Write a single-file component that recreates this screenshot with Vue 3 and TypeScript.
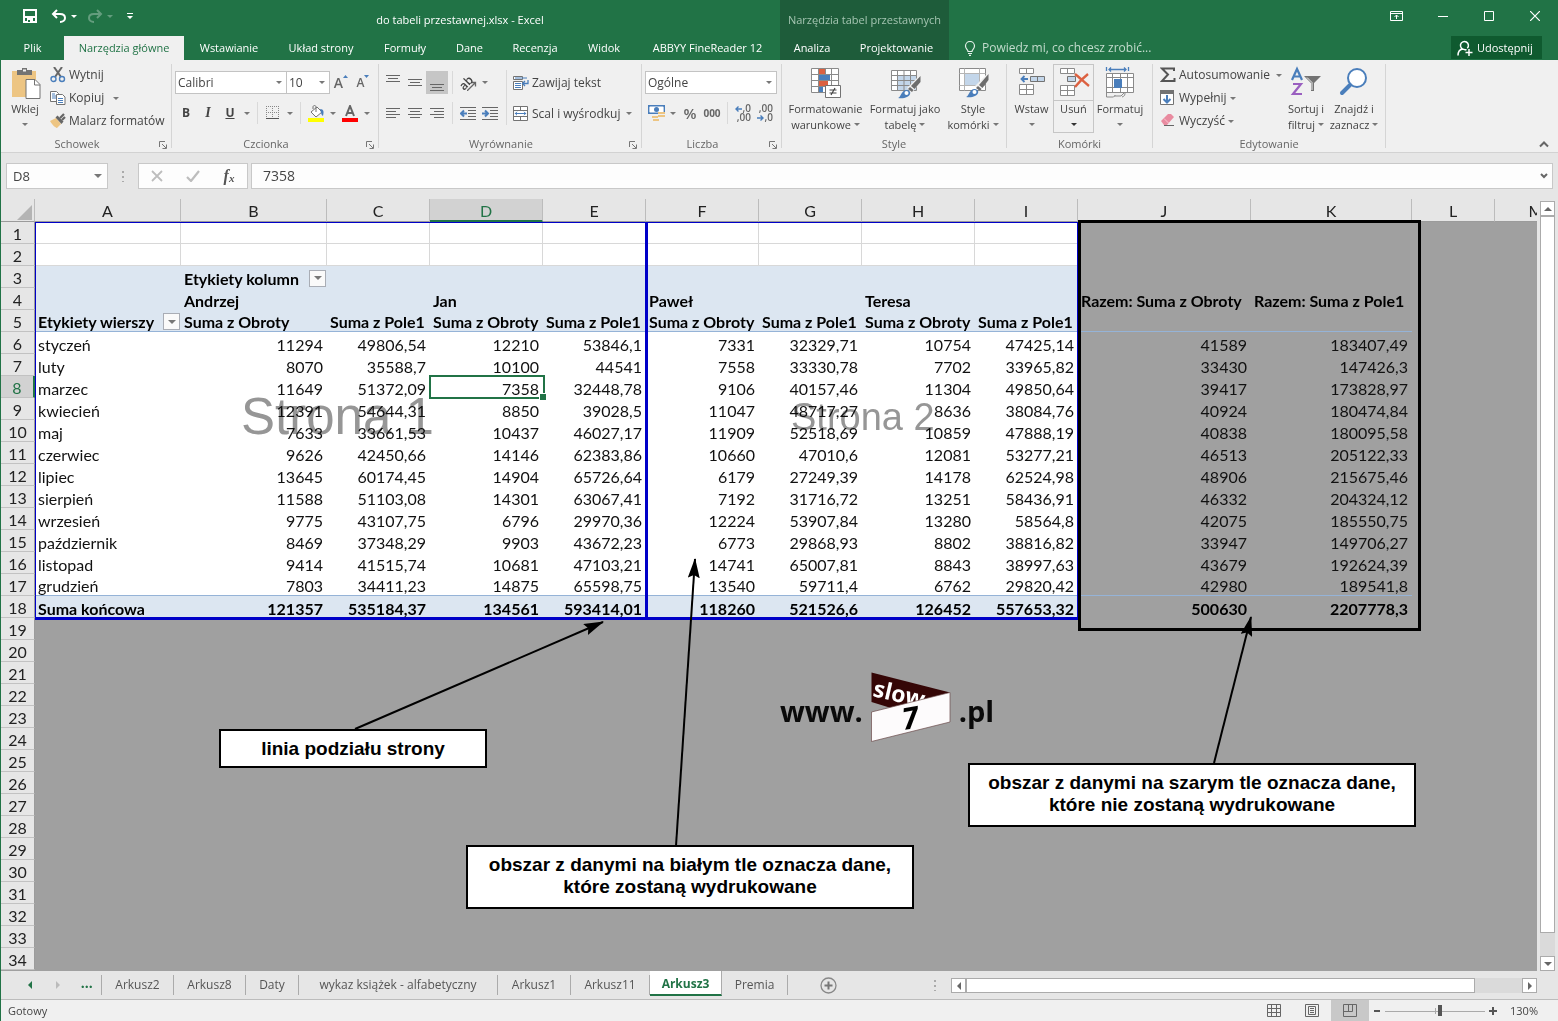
<script setup lang="ts">
import { ref } from 'vue'

interface Column { id: string; width: number }
interface Tab { label: string }

const columns: Column[] = [
  { id: 'A', width: 146 }, { id: 'B', width: 146 }, { id: 'C', width: 103 },
  { id: 'D', width: 113 }, { id: 'E', width: 103 }, { id: 'F', width: 113 },
  { id: 'G', width: 103 }, { id: 'H', width: 113 }, { id: 'I', width: 103 },
  { id: 'J', width: 173 }, { id: 'K', width: 161 }, { id: 'L', width: 83 },
  { id: 'M', width: 83 },
]

const months: string[][] = [
  ['styczeń', '11294', '49806,54', '12210', '53846,1', '7331', '32329,71', '10754', '47425,14', '41589', '183407,49'],
  ['luty', '8070', '35588,7', '10100', '44541', '7558', '33330,78', '7702', '33965,82', '33430', '147426,3'],
  ['marzec', '11649', '51372,09', '7358', '32448,78', '9106', '40157,46', '11304', '49850,64', '39417', '173828,97'],
  ['kwiecień', '12391', '54644,31', '8850', '39028,5', '11047', '48717,27', '8636', '38084,76', '40924', '180474,84'],
  ['maj', '7633', '33661,53', '10437', '46027,17', '11909', '52518,69', '10859', '47888,19', '40838', '180095,58'],
  ['czerwiec', '9626', '42450,66', '14146', '62383,86', '10660', '47010,6', '12081', '53277,21', '46513', '205122,33'],
  ['lipiec', '13645', '60174,45', '14904', '65726,64', '6179', '27249,39', '14178', '62524,98', '48906', '215675,46'],
  ['sierpień', '11588', '51103,08', '14301', '63067,41', '7192', '31716,72', '13251', '58436,91', '46332', '204324,12'],
  ['wrzesień', '9775', '43107,75', '6796', '29970,36', '12224', '53907,84', '13280', '58564,8', '42075', '185550,75'],
  ['październik', '8469', '37348,29', '9903', '43672,23', '6773', '29868,93', '8802', '38816,82', '33947', '149706,27'],
  ['listopad', '9414', '41515,74', '10681', '47103,21', '14741', '65007,81', '8843', '38997,63', '43679', '192624,39'],
  ['grudzień', '7803', '34411,23', '14875', '65598,75', '13540', '59711,4', '6762', '29820,42', '42980', '189541,8'],
]

const cells: Record<number, string[]> = {
  3: ['', 'Etykiety kolumn'],
  4: ['', 'Andrzej', '', 'Jan', '', 'Paweł', '', 'Teresa', '', 'Razem: Suma z Obroty', 'Razem: Suma z Pole1'],
  5: ['Etykiety wierszy', 'Suma z Obroty', 'Suma z Pole1', 'Suma z Obroty', 'Suma z Pole1', 'Suma z Obroty', 'Suma z Pole1', 'Suma z Obroty', 'Suma z Pole1'],
  18: ['Suma końcowa', '121357', '535184,37', '134561', '593414,01', '118260', '521526,6', '126452', '557653,32', '500630', '2207778,3'],
}
months.forEach((m, i) => { cells[6 + i] = m })

const rowCount = 34
const text = (row: number, col: number): string => cells[row]?.[col] ?? ''
const hasFilter = (row: number, col: number): boolean => (row === 3 && col === 1) || (row === 5 && col === 0)

function cellClass(row: number, col: number) {
  const printed = row <= 18 && col <= 8
  return {
    printed,
    lined: printed && row <= 2,
    head: printed && ((row >= 3 && row <= 5) || row === 18),
    bold: (row >= 3 && row <= 5) || row === 18,
    num: row >= 6 && col > 0,
    rule: (row === 5 || row === 17) && col <= 10,
  }
}

const ribbonTabs: Tab[] = [
  { label: 'Plik' }, { label: 'Narzędzia główne' }, { label: 'Wstawianie' }, { label: 'Układ strony' },
  { label: 'Formuły' }, { label: 'Dane' }, { label: 'Recenzja' }, { label: 'Widok' }, { label: 'ABBYY FineReader 12' },
]
const sheets = [
  { label: 'Arkusz2', width: 72 }, { label: 'Arkusz8', width: 72 }, { label: 'Daty', width: 53 },
  { label: 'wykaz książek - alfabetyczny', width: 199 }, { label: 'Arkusz1', width: 73 },
  { label: 'Arkusz11', width: 79 }, { label: 'Arkusz3', width: 72 }, { label: 'Premia', width: 66 },
]
const activeTab = ref('Narzędzia główne')
const activeSheet = ref('Arkusz3')
const zoom = ref(55)
const formula = ref('7358')
const cellName = ref('D8')
</script>

<template>
  <div class="app">
    <header class="top">
      <div class="titlebar">
        <div class="qat">
          <button class="q" aria-label="Zapisz">
            <svg width="14" height="14" viewBox="0 0 14 14"><path d="M1 1h12v12H1z" fill="none" stroke="#fff" stroke-width="2" /><path d="M1 7h12v2H1zM4 9h6v5H4z" fill="#fff" /><path d="M5 11h2v2H5z" fill="#217346" /></svg>
          </button>
          <button class="q" aria-label="Cofnij">
            <svg width="16" height="14" viewBox="0 0 16 14"><path d="M6 1L2 5l4 4M2 5h7c3 0 5 1.500 5 4 0 2-2 4-5 4" fill="none" stroke="#fff" stroke-width="2" /></svg>
            <i class="caret light"></i>
          </button>
          <button class="q dim" aria-label="Ponów">
            <svg width="16" height="14" viewBox="0 0 16 14"><path d="M10 1l4 4-4 4M14 5H7C4 5 2 6.500 2 9c0 2 2 4 5 4" fill="none" stroke="#fff" stroke-width="2" /></svg>
            <i class="caret light"></i>
          </button>
          <button class="q" aria-label="Dostosuj pasek">
            <svg width="6" height="8" viewBox="0 0 6 8"><path d="M0 1h6v1H0zM0 4h6L3 7z" fill="#fff" /></svg>
          </button>
        </div>
        <div class="doc">do tabeli przestawnej.xlsx - Excel</div>
        <div class="context">Narzędzia tabel przestawnych</div>
        <div class="grow"></div>
        <div class="win">
          <button aria-label="Opcje wstążki"><svg width="14" height="12" viewBox="0 0 14 12"><path d="M.5 1.500h12v9H.5zM.5 3.500h12M6.500 9V5M4.500 7l2-2 2 2" fill="none" stroke="#fff" /></svg></button>
          <button aria-label="Minimalizuj"><svg width="10" height="10" viewBox="0 0 10 10"><path d="M0 5.500h10" stroke="#fff" /></svg></button>
          <button aria-label="Maksymalizuj"><svg width="10" height="10" viewBox="0 0 10 10"><path d="M.5.5h9v9h-9z" fill="none" stroke="#fff" /></svg></button>
          <button aria-label="Zamknij"><svg width="10" height="10" viewBox="0 0 10 10"><path d="M0 0l10 10M10 0L0 10" stroke="#fff" stroke-width="1.200" /></svg></button>
        </div>
      </div>
      <nav class="tabs">
        <div class="main-tabs">
          <button v-for="t in ribbonTabs" :key="t.label" :class="{ on: t.label === activeTab }" @click="activeTab = t.label">{{ t.label }}</button>
        </div>
        <div class="context-tabs">
          <button>Analiza</button>
          <button>Projektowanie</button>
        </div>
        <label class="tell">
          <svg width="12" height="15" viewBox="0 0 12 15"><path d="M4 10.500C4 8.500 1.500 8 1.500 5a4.500 4.500 0 0 1 9 0c0 3-2.500 3.500-2.500 5.500zM4 12.500h4M5 14.300h2" fill="none" stroke="#e4f0e9" stroke-width="1.200" /></svg>
          <input type="text" placeholder="Powiedz mi, co chcesz zrobić..." aria-label="Powiedz mi, co chcesz zrobić" />
        </label>
        <button class="share">
          <svg width="16" height="16" viewBox="0 0 16 16"><path d="M7.500 9.500a4 4 0 1 1 2.800-1.200M5.500 9C3 9.500 1 11.500 1 15.500M7 9.500c1 0 2 .2 2.500.5M12 9v7M8.500 12.500h7M10.300 8.300a4 4 0 0 0 .5-.6" fill="none" stroke="#fff" stroke-width="1.500" /></svg>
          Udostępnij
        </button>
      </nav>
    </header>

    <section class="ribbon">
      <div class="group g-clip">
        <div class="body">
          <button class="big">
            <svg width="32" height="32" viewBox="0 0 32 32"><path d="M3 3h24v26H3z" fill="#edc583" /><path d="M8 2h5V0h5v2h5v5H8z" fill="#737373" /><path d="M14 1.500h3v2h-3z" fill="#f0f0f0" /><path d="M17 11.500h9l5 5v14H17z" fill="#fff" stroke="#737373" /><path d="M25.500 11.500v5.500H31" fill="none" stroke="#737373" /></svg>
            <span>Wklej</span><i class="caret"></i>
          </button>
          <div class="stack">
            <button class="small">
              <svg width="16" height="16" viewBox="0 0 16 16"><path d="M4 0l7 10M12 0L5 10" stroke="#666" stroke-width="2" /><circle cx="3.500" cy="12" r="2.500" fill="none" stroke="#4a7ebb" stroke-width="1.400" /><circle cx="12" cy="12" r="2.500" fill="none" stroke="#4a7ebb" stroke-width="1.400" /></svg>
              Wytnij
            </button>
            <button class="small">
              <svg width="16" height="16" viewBox="0 0 16 16"><path d="M.5 1.500h6l2 2v8h-8z" fill="#fff" stroke="#737373" /><path d="M2 4h3M2 6h4M2 8h4" stroke="#4a7ebb" /><path d="M6.500 4.500h6l2.500 2.500v7.500H6.500z" fill="#fff" stroke="#737373" /><path d="M8 8.500h5M8 10.500h5M8 12.500h5" stroke="#4a7ebb" /></svg>
              Kopiuj<i class="caret far"></i>
            </button>
            <button class="small">
              <svg width="16" height="16" viewBox="0 0 16 16"><path d="M0 8l6-3 5 6-4 4c-1 0-4-2-7-7z" fill="#edc583" /><path d="M5.500 4.500l2-2 6 6-2 2.500z" fill="#666" /><path d="M10 5l4-4M12 7l3-3" stroke="#666" stroke-width="2.200" /></svg>
              Malarz formatów
            </button>
          </div>
        </div>
        <div class="foot">Schowek<svg class="launch" viewBox="0 0 8 8"><path d="M.5 6V.5H6M3 3l4 4M7.500 3.500v4h-4" fill="none" stroke="#777" /></svg></div>
      </div>

      <div class="group g-font">
        <div class="body rows">
          <div class="line">
            <div class="sel wide"><select aria-label="Czcionka"><option>Calibri</option></select><i class="caret"></i></div>
            <div class="sel narrow"><select aria-label="Rozmiar czcionki"><option>10</option></select><i class="caret"></i></div>
            <button class="ib grow-a" aria-label="Zwiększ rozmiar"><b class="fa">A</b><svg width="5" height="3" viewBox="0 0 5 3"><path d="M0 3h5L2.500 0z" fill="#4a7ebb" /></svg></button>
            <button class="ib shrink-a" aria-label="Zmniejsz rozmiar"><b class="fa">A</b><svg width="5" height="3" viewBox="0 0 5 3"><path d="M0 0h5L2.500 3z" fill="#4a7ebb" /></svg></button>
          </div>
          <div class="line second">
            <button class="ib strong">B</button><button class="ib strong ital">I</button><button class="ib strong under">U</button>
            <button class="cb" aria-label="Więcej"><i class="caret"></i></button><i class="sep"></i>
            <button class="ib" aria-label="Obramowanie"><svg width="14" height="14" viewBox="0 0 14 14"><path d="M.5 0v13M6.500 0v13M12.500 0v13M0 .5h13M0 6.500h13" stroke="#888" stroke-dasharray="1 1" /><path d="M0 12.500h13" stroke="#555" /></svg></button>
            <button class="cb" aria-label="Rodzaje obramowań"><i class="caret"></i></button><i class="sep"></i>
            <button class="ib" aria-label="Kolor wypełnienia"><svg width="17" height="17" viewBox="0 0 17 17"><path d="M3 7l6-5 5 5-6 5z" fill="#fff" stroke="#737373" /><path d="M8 7V2c0-2-3-2-3 0v2" fill="none" stroke="#737373" /><path d="M12 4c4 0 4 3 3 7-2-1-2-4-3-7z" fill="#4a7ebb" /><path d="M0 13h16v4H0z" fill="#ff0" /></svg></button>
            <button class="cb" aria-label="Kolory wypełnienia"><i class="caret"></i></button>
            <button class="ib" aria-label="Kolor czcionki"><svg width="17" height="17" viewBox="0 0 17 17"><path d="M4 11L8 1l4 10M5.500 8h5" fill="none" stroke="#666" stroke-width="2" /><path d="M0 13h16v4H0z" fill="#f00" /></svg></button>
            <button class="cb" aria-label="Kolory czcionki"><i class="caret"></i></button>
          </div>
        </div>
        <div class="foot">Czcionka<svg class="launch" viewBox="0 0 8 8"><path d="M.5 6V.5H6M3 3l4 4M7.500 3.500v4h-4" fill="none" stroke="#777" /></svg></div>
      </div>

      <div class="group g-align">
        <div class="body">
          <div class="rows">
            <div class="line">
              <button class="ib" aria-label="Do góry"><svg width="14" height="18" viewBox="0 0 14 18"><path d="M0 1.500h14M2 4.500h10M0 7.500h14" stroke="#666" /></svg></button>
              <button class="ib" aria-label="Do środka"><svg width="14" height="18" viewBox="0 0 14 18"><path d="M0 5.500h14M2 8.500h10M0 11.500h14" stroke="#666" /></svg></button>
              <button class="ib pressed" aria-label="Do dołu"><svg width="14" height="18" viewBox="0 0 14 18"><path d="M0 10.500h14M2 13.500h10M0 16.500h14" stroke="#666" /></svg></button>
              <i class="sep"></i>
              <button class="ib orient" aria-label="Orientacja"><span>ab</span><svg width="10" height="10" viewBox="0 0 10 10"><path d="M0 10l8-8M4.500 1.500H8.500V5.500" fill="none" stroke="#666" stroke-width="1.300" /></svg></button>
              <button class="cb" aria-label="Więcej orientacji"><i class="caret"></i></button>
            </div>
            <div class="line second">
              <button class="ib" aria-label="Do lewej"><svg width="14" height="12" viewBox="0 0 14 12"><path d="M0 1.500h14M0 4.500h10M0 7.500h14M0 10.500h10" stroke="#666" /></svg></button>
              <button class="ib" aria-label="Wyśrodkuj"><svg width="14" height="12" viewBox="0 0 14 12"><path d="M0 1.500h14M2 4.500h10M0 7.500h14M2 10.500h10" stroke="#666" /></svg></button>
              <button class="ib" aria-label="Do prawej"><svg width="14" height="12" viewBox="0 0 14 12"><path d="M0 1.500h14M4 4.500h10M0 7.500h14M4 10.500h10" stroke="#666" /></svg></button>
              <i class="sep"></i>
              <button class="ib" aria-label="Zmniejsz wcięcie"><svg width="16" height="13" viewBox="0 0 16 13"><path d="M0 .5h16M8 3.500h8M8 6.500h8M8 9.500h8M0 12.500h16" stroke="#666" /><path d="M7 6.500H2M4 3.500l-3 3 3 3" fill="none" stroke="#4a7ebb" stroke-width="2" /></svg></button>
              <button class="ib" aria-label="Zwiększ wcięcie"><svg width="16" height="13" viewBox="0 0 16 13"><path d="M0 .5h16M8 3.500h8M8 6.500h8M8 9.500h8M0 12.500h16" stroke="#666" /><path d="M0 6.500h5M3 3.500l3 3-3 3" fill="none" stroke="#4a7ebb" stroke-width="2" /></svg></button>
            </div>
          </div>
          <i class="tall"></i>
          <div class="rows">
            <button class="small tallrow">
              <svg width="16" height="16" viewBox="0 0 16 16"><path d="M.5 1.500h9v3h-9zM.5 6.500h9v8h-9z" fill="#fff" stroke="#737373" /><path d="M2 3h12M2 8.500h6M2 10.500h6M2 12.500h6" stroke="#4a7ebb" /><path d="M15 5v3.500h-5M12 6l-2.500 2.500L12 11" fill="none" stroke="#4a7ebb" stroke-width="1.300" /></svg>
              Zawijaj tekst
            </button>
            <button class="small tallrow">
              <svg width="16" height="16" viewBox="0 0 16 16"><path d="M.5.5h14v14H.5zM.5 4.500h14M.5 10.500h14M7.500 1v3M7.500 11v3" fill="#fff" stroke="#737373" /><path d="M2 7.500h11M4 5.800L2.300 7.500 4 9.200M11 5.800l1.700 1.700L11 9.200" fill="none" stroke="#4a7ebb" /></svg>
              Scal i wyśrodkuj<i class="caret mid"></i>
            </button>
          </div>
        </div>
        <div class="foot">Wyrównanie<svg class="launch" viewBox="0 0 8 8"><path d="M.5 6V.5H6M3 3l4 4M7.500 3.500v4h-4" fill="none" stroke="#777" /></svg></div>
      </div>

      <div class="group g-num">
        <div class="body rows">
          <div class="line"><div class="sel full"><select aria-label="Format liczb"><option>Ogólne</option></select><i class="caret"></i></div></div>
          <div class="line second">
            <button class="ib" aria-label="Format księgowy"><svg width="17" height="16" viewBox="0 0 17 16"><path d="M.7.7h15.600v7.600H.7z" fill="#fff" stroke="#4a7ebb" stroke-width="1.400" /><circle cx="8.500" cy="4.500" r="2.500" fill="#4a7ebb" /><path d="M0 0h3L0 3zM17 0h-3l3 3zM0 9h3L0 6z" fill="#4a7ebb" /><path d="M10 7h7v2h-7zM10 10h7v2h-7zM4 11h6v2H4zM5 14h6v2H5z" fill="#edc583" /></svg></button>
            <button class="cb" aria-label="Waluty"><i class="caret"></i></button>
            <button class="ib pct">%</button><button class="ib zeros">000</button><i class="sep"></i>
            <button class="ib dec" aria-label="Zwiększ dziesiętne"><span class="end">,0</span><span class="end">,00</span><svg width="7" height="6" viewBox="0 0 7 6"><path d="M7 3H1M3.500.5L1 3l2.500 2.500" fill="none" stroke="#4a7ebb" stroke-width="1.400" /></svg></button>
            <button class="ib dec inc" aria-label="Zmniejsz dziesiętne"><span class="end">,00</span><span class="end">,0</span><svg width="7" height="6" viewBox="0 0 7 6"><path d="M0 3h6M3.500.5L6 3 3.500 5.500" fill="none" stroke="#4a7ebb" stroke-width="1.400" /></svg></button>
          </div>
        </div>
        <div class="foot">Liczba<svg class="launch" viewBox="0 0 8 8"><path d="M.5 6V.5H6M3 3l4 4M7.500 3.500v4h-4" fill="none" stroke="#777" /></svg></div>
      </div>

      <div class="group g-style">
        <div class="body">
          <button class="big b81">
            <svg width="32" height="32" viewBox="0 0 32 32"><path d="M1.500.5h27v24h-27z" fill="#fff" /><path d="M9 1h6v5H9zM9 13h9v5H9z" fill="#dc6141" /><path d="M9 7h11v5H9zM9 19h4v5H9z" fill="#4a7ebb" /><path d="M1.500.5h27v24h-27zM1.500 6.500h27M1.500 12.500h27M1.500 18.500h27M8.500.5v24M15.500.5v6M21.500.5v24" fill="none" stroke="#8a8a8a" /><path d="M15.500 17.500h15v12h-15z" fill="#fff" stroke="#737373" /><path d="M19.500 22h7M19.500 25h7M25 20l-4 7" stroke="#444" stroke-width="1.200" /></svg>
            <span>Formatowanie</span><span>warunkowe<i class="caret in"></i></span>
          </button>
          <button class="big b78">
            <svg width="32" height="32" viewBox="0 0 32 32"><path d="M2.500 2.500h25v20h-25z" fill="#fff" /><path d="M9 8h18v14H9z" fill="#c3d6ea" /><path d="M2.500 2.500h25v20h-25zM2.500 7.500h25M2.500 12.500h25M2.500 17.500h25M8.500 2.500v20M15 2.500v20M21.500 2.500v20" fill="none" stroke="#8a8a8a" /><path d="M31 7l1 6-9 12-5-5z" fill="#f0f0f0" /><path d="M31.500 8v6l-6 7-3.500-3zM21 19l3.500 3-1.500 2-4-3z" fill="#6d6d6d" /><path d="M9 30c3-1 3-7 8-8 3 0 5 2 4 4-1 3-6 5-12 4z" fill="#4a7ebb" /><circle cx="17.500" cy="25" r="2" fill="#fff" /></svg>
            <span>Formatuj jako</span><span>tabelę<i class="caret in"></i></span>
          </button>
          <button class="big b58">
            <svg width="32" height="32" viewBox="0 0 32 32"><path d="M2.500.5h26v22h-26z" fill="#fff" stroke="#8a8a8a" /><path d="M2.500 5.500h26M2.500 17.500h26M7.500.5v22M22.500.5v22" stroke="#b5b5b5" /><path d="M8 6h14v11H8z" fill="#c3d6ea" /><path d="M31 5l1 6-9 12-5-5z" fill="#f0f0f0" /><path d="M31.500 6v6l-6 8-3.500-3zM21 18l3.500 3-1.500 2-4-3z" fill="#6d6d6d" /><path d="M9 29c3-1 3-7 8-8 3 0 5 2 4 4-1 3-6 5-12 4z" fill="#4a7ebb" /><circle cx="17.500" cy="24" r="2" fill="#fff" /></svg>
            <span>Style</span><span>komórki<i class="caret in"></i></span>
          </button>
        </div>
        <div class="foot">Style</div>
      </div>

      <div class="group g-cells">
        <div class="body">
          <button class="big b43">
            <svg width="32" height="32" viewBox="0 0 32 32"><path d="M3.500.5h14v5h-14zM10.500.5v5M3.500 16.500h14v10h-14zM3.500 21.500h14M10.500 16.500v10" fill="#fff" stroke="#8a8a8a" /><path d="M14.500 8.500h14v5h-14zM21.500 8.500v5" fill="#c3d6ea" stroke="#737373" /><path d="M12 11H6M8.500 8l-3 3 3 3" fill="none" stroke="#4a7ebb" stroke-width="1.800" /></svg>
            <span>Wstaw</span><i class="caret"></i>
          </button>
          <button class="big b41 split">
            <svg width="32" height="32" viewBox="0 0 32 32"><path d="M2.500.5h14v5h-14zM9.500.5v5M2.500 17.500h14v10h-14zM2.500 22.500h14M9.500 17.500v10" fill="#fff" stroke="#8a8a8a" /><path d="M9.500 8.500h8v5h-8z" fill="#c3d6ea" stroke="#737373" /><path d="M17 6c4 3 9 8 14 12M30 6C25 10 21 14 17 19" fill="none" stroke="#dc6141" stroke-width="2.400" /></svg>
            <span>Usuń</span><i class="caret dark"></i>
          </button>
          <button class="big b52">
            <svg width="32" height="32" viewBox="0 0 32 32"><path d="M2.500 5.500h27v19h-27z" fill="#fff" /><path d="M2.500 5.500h27v19h-27zM2.500 9.500h27M2.500 19.500h27M8.500 5.500v19M16.500 5.500v19M23.500 5.500v19" fill="none" stroke="#8a8a8a" /><path d="M10 11h8v9h-8z" fill="#4a7ebb" /><path d="M2.500 24v5h7l2-2M10 28h7l4-4M21 24c0 3 0 4-3 5" fill="none" stroke="#8a8a8a" /><path d="M2.500-1v4M24.500-1v4M5 1.500h17M7-.5l-2 2 2 2M20-.5l2 2-2 2" fill="none" stroke="#4a7ebb" stroke-width="1.300" /></svg>
            <span>Formatuj</span><i class="caret"></i>
          </button>
        </div>
        <div class="foot">Komórki</div>
      </div>

      <div class="group g-edit">
        <div class="body">
          <div class="stack">
            <button class="small"><svg width="16" height="16" viewBox="0 0 16 16"><path d="M14 4V1.500H2l6 6-6 6.500h12.500V11" fill="none" stroke="#555" stroke-width="2" /></svg>Autosumowanie<i class="caret mid"></i></button>
            <button class="small"><svg width="16" height="16" viewBox="0 0 16 16"><path d="M.5.5h13v14H.5z" fill="#fff" stroke="#737373" /><path d="M0 0h14v4H0z" fill="#737373" /><path d="M7 5v7M3.500 9L7 12.500 10.500 9" fill="none" stroke="#4a7ebb" stroke-width="2" /></svg>Wypełnij<i class="caret"></i></button>
            <button class="small"><svg width="16" height="16" viewBox="0 0 16 16"><path d="M1 8l7-7h3l3 3-7 8H4z" fill="#e98ba0" /><path d="M4 5.500l5 5" stroke="#f7c8d1" /><path d="M4 12.500h10" stroke="#666" /></svg>Wyczyść<i class="caret"></i></button>
          </div>
          <button class="big b44">
            <svg width="32" height="32" viewBox="0 0 32 32"><path d="M2 12L7 1l5 11M4 8.500h6" fill="none" stroke="#4a7ebb" stroke-width="2.200" /><path d="M3 16h8L3 26h9" fill="none" stroke="#9a5fc0" stroke-width="2.200" /><path d="M14 8h17l-7 7v8h-3v-8z" fill="#737373" /><path d="M17 9.500l5 5V22" fill="none" stroke="#f0f0f0" /></svg>
            <span>Sortuj i</span><span>filtruj<i class="caret in"></i></span>
          </button>
          <button class="big b52">
            <svg width="32" height="32" viewBox="0 0 32 32"><circle cx="19" cy="10" r="9" fill="#fff" stroke="#4a7ebb" stroke-width="2" /><path d="M12 17l-8 8" stroke="#4a7ebb" stroke-width="4" stroke-linecap="round" /></svg>
            <span>Znajdź i</span><span>zaznacz<i class="caret in"></i></span>
          </button>
        </div>
        <div class="foot">Edytowanie</div>
      </div>
      <div class="grow"></div>
      <button class="collapse" aria-label="Zwiń wstążkę"><svg width="10" height="7" viewBox="0 0 10 7"><path d="M1 5.500l4-4 4 4" fill="none" stroke="#666" stroke-width="2" /></svg></button>
    </section>

    <section class="formula">
      <div class="namebox"><input v-model="cellName" aria-label="Pole nazwy" /><button aria-label="Lista nazw"><i class="caret big-caret"></i></button></div>
      <div class="dots"></div>
      <div class="fx">
        <button aria-label="Anuluj"><svg width="12" height="12" viewBox="0 0 12 12"><path d="M1 1l10 10M11 1L1 11" stroke="#bdbdbd" stroke-width="1.800" /></svg></button>
        <button aria-label="Wpis"><svg width="14" height="12" viewBox="0 0 14 12"><path d="M1 7l4 4 8-10" fill="none" stroke="#bdbdbd" stroke-width="2.200" /></svg></button>
        <button class="fn" aria-label="Wstaw funkcję"><em>f</em><em class="x">x</em></button>
      </div>
      <div class="input"><input v-model="formula" aria-label="Pasek formuły" /><button aria-label="Rozwiń"><svg width="8" height="6" viewBox="0 0 8 6"><path d="M1 1l3 3 3-3" fill="none" stroke="#666" stroke-width="2" /></svg></button></div>
    </section>

    <main class="sheet">
      <div class="canvas">
        <table>
          <colgroup><col class="rowcol" /><col v-for="c in columns" :key="c.id" :style="{ width: c.width + 'px' }" /></colgroup>
          <thead>
            <tr>
              <th class="corner"><svg width="15" height="15" viewBox="0 0 15 15"><path d="M15 0v15H0z" fill="#b4b4b4" /></svg></th>
              <th v-for="c in columns" :key="c.id" :class="{ cur: c.id === 'D' }">{{ c.id }}</th>
            </tr>
          </thead>
          <tbody>
            <tr v-for="r in rowCount" :key="r">
              <th :class="{ cur: r === 8 }">{{ r }}</th>
              <td v-for="(c, i) in columns" :key="c.id" :class="cellClass(r, i)">
                <div v-if="hasFilter(r, i)" class="with-filter"><span>{{ text(r, i) }}</span><button class="filter" aria-label="Filtr"><i class="caret big-caret"></i></button></div>
                <template v-else>{{ text(r, i) }}</template>
              </td>
            </tr>
          </tbody>
        </table>
        <div class="mark one">Strona 1</div>
        <div class="mark two">Strona 2</div>
        <div class="print-area"></div>
        <div class="page-break"></div>
        <div class="unprinted"></div>
        <div class="selection"></div>
        <div class="logo">
          <span>www.</span>
          <svg width="80" height="70" viewBox="0 0 80 70">
            <path d="M.5.5L79 20.500 20 36 .5 30z" fill="#350606" />
            <text x="1" y="24" transform="rotate(13 1 24)" class="lg-slow">slow</text>
            <path d="M.5 40L79 20.500V50L.5 69.500z" fill="#fdfbfc" stroke="#6b4a4a" stroke-width=".7" />
            <text x="33" y="58" transform="rotate(-10 33 58)" class="lg-seven">7</text>
          </svg>
          <span>.pl</span>
        </div>
        <svg class="arrows" width="1536" height="772" viewBox="1 199 1536 772">
          <defs><marker id="tip" markerWidth="20" markerHeight="12" refX="19" refY="6" orient="auto" markerUnits="userSpaceOnUse"><path d="M0 0l20 6L0 12l3-6z" /></marker></defs>
          <path d="M355 729L603 622" marker-end="url(#tip)" />
          <path d="M676 846L695 559" marker-end="url(#tip)" />
          <path d="M1214 763L1251 617" marker-end="url(#tip)" />
        </svg>
        <div class="note n1">linia podziału strony</div>
        <div class="note n2">obszar z danymi na białym tle oznacza dane,<br />które zostaną wydrukowane</div>
        <div class="note n3">obszar z danymi na szarym tle oznacza dane,<br />które nie zostaną wydrukowane</div>
      </div>
      <div class="vscroll">
        <button aria-label="W górę"><i class="tri up"></i></button>
        <div class="vthumb"></div>
        <div class="vtrack"></div>
        <button aria-label="W dół"><i class="tri down"></i></button>
      </div>
    </main>

    <nav class="sheets">
      <div class="navs"><button aria-label="Poprzedni"><i class="tri left green"></i></button><button aria-label="Następny"><i class="tri right pale"></i></button><button class="more">...</button></div>
      <button v-for="s in sheets" :key="s.label" class="st" :class="{ on: s.label === activeSheet }" :style="{ width: s.width + 'px' }" @click="activeSheet = s.label">{{ s.label }}</button>
      <button class="add" aria-label="Nowy arkusz"><svg width="17" height="17" viewBox="0 0 17 17"><circle cx="8.500" cy="8.500" r="7.500" fill="none" stroke="#888" stroke-width="1.300" /><path d="M4.500 8.500h8M8.500 4.500v8" stroke="#777" stroke-width="2" /></svg></button>
      <div class="grow"></div>
      <div class="dots"></div>
      <div class="hscroll">
        <button aria-label="W lewo"><i class="tri left"></i></button>
        <div class="hthumb"></div>
        <div class="htrack"></div>
        <button aria-label="W prawo"><i class="tri right"></i></button>
      </div>
    </nav>

    <footer class="status">
      <span>Gotowy</span>
      <div class="grow"></div>
      <button aria-label="Normalny"><svg width="14" height="14" viewBox="0 0 14 14"><path d="M.5.5h13v12H.5zM.5 4.500h13M.5 8.500h13M4.500.5v12M9.500.5v12" fill="none" stroke="#666" /></svg></button>
      <button aria-label="Układ strony"><svg width="14" height="14" viewBox="0 0 14 14"><path d="M.5.5h13v12H.5zM3.500 2.500h7v8h-7zM5 4.500h4M5 6.500h4M5 8.500h4" fill="none" stroke="#666" /></svg></button>
      <button class="on" aria-label="Podgląd podziału stron"><svg width="14" height="14" viewBox="0 0 14 14"><path d="M.5.5h13v12H.5zM.5 7.500h9M9.500 .5v7M5.500 .5v7" fill="none" stroke="#666" /></svg></button>
      <button class="zb" aria-label="Pomniejsz"><svg width="6" height="2" viewBox="0 0 6 2"><path d="M0 0h6v2H0z" fill="#555" /></svg></button>
      <input v-model="zoom" type="range" min="0" max="100" aria-label="Powiększenie" />
      <button class="zb" aria-label="Powiększ"><svg width="8" height="8" viewBox="0 0 8 8"><path d="M3 0h2v8H3zM0 3h8v2H0z" fill="#555" /></svg></button>
      <span class="pct-label">130%</span>
    </footer>
  </div>
</template>

<style>
body { margin: 0; background: #e6e6e6; }
</style>

<style scoped>
* { box-sizing: border-box; }
.app { display: flex; flex-direction: column; min-height: 100vh; border-left: 1px solid #217346; background: #e6e6e6; font-family: "Open Sans", "Noto Sans", sans-serif; font-size: 12px; line-height: 16px; color: #444; overflow: hidden; }
button { border: 0; padding: 0; margin: 0; background: none; font: inherit; color: inherit; white-space: nowrap; cursor: pointer; }
input, select { font: inherit; color: inherit; border: 0; margin: 0; padding: 0; outline: 0; background: none; }
svg { display: block; flex: none; }
.grow { flex: 1; }
.caret { display: block; flex: none; width: 0; height: 0; border: 3px solid transparent; border-top-color: #777; border-bottom: 0; }
.caret.light { border-top-color: #fff; }
.caret.dark { border-top-color: #333; }
.caret.in { display: inline-block; margin-left: 3px; vertical-align: 3px; }
.caret.far { margin-left: 6px; }
.caret.mid { margin-left: 3px; }
.caret.big-caret { border-width: 4px; border-bottom: 0; }

.top { background: #217346; color: #fff; font-size: 11px; }
.titlebar { display: flex; height: 36px; }
.qat { display: flex; align-items: center; width: 139px; padding: 0 0 4px 22px; gap: 14px; }
.q { display: flex; align-items: center; gap: 4px; }
.q.dim { opacity: .3; margin-left: -4px; }
.doc { flex: 0 1 640px; text-align: center; line-height: 40px; white-space: nowrap; }
.context { width: 169px; background: #1e5c3a; color: #a5c5b2; text-align: center; line-height: 40px; white-space: nowrap; }
.win { display: flex; }
.win button { display: flex; align-items: center; justify-content: center; width: 46px; height: 32px; }
.tabs { display: flex; height: 24px; }
.main-tabs { display: grid; grid-template-columns: 63px 120px 90px 94px 74px 55px 76px 62px 145px; }
.main-tabs .on { background: #f0f0f0; color: #217346; }
.context-tabs { display: grid; grid-template-columns: 64px 105px; width: 169px; background: #1e5c3a; }
.tell { display: flex; flex: 1; align-items: center; gap: 6px; padding-left: 15px; font-size: 12px; }
.tell input { flex: 1; }
.tell input::placeholder { color: #c3dccd; opacity: 1; }
.share { display: flex; align-items: center; gap: 4px; width: 91px; height: 23px; margin-right: 16px; padding-left: 6px; background: #0f5a2f; }

.ribbon { display: flex; height: 93px; background: #f0f0f0; border-bottom: 1px solid #d2d2d2; }
.group { display: flex; flex-direction: column; flex: none; height: 84px; margin-top: 4px; border-right: 1px solid #d5d5d5; }
.g-clip { width: 171px; }
.g-font { width: 207px; }
.g-align { width: 263px; }
.g-num { width: 140px; }
.g-style { width: 225px; }
.g-cells { width: 146px; }
.g-edit { width: 233px; }
.body { display: flex; flex: none; height: 72px; }
.foot { position: relative; flex: none; text-align: center; font-size: 11px; color: #666; padding-right: 18px; }
.g-style .foot, .g-cells .foot, .g-edit .foot { padding-right: 0; }
.launch { position: absolute; right: 4px; top: 5px; width: 8px; height: 8px; }
.big { display: flex; flex-direction: column; align-items: center; width: 48px; padding-top: 4px; font-size: 11px; }
.big > svg { margin-bottom: 1px; overflow: visible; }
.big > .caret { margin-top: 6px; }
.b81 { width: 81px; } .b78 { width: 78px; } .b58 { width: 58px; } .b43 { width: 43px; } .b41 { width: 41px; } .b44 { width: 44px; } .b52 { width: 52px; }
.split { height: 69px; padding-top: 3px; border: 1px solid #c6c6c6; background: linear-gradient(#c6c6c6, #c6c6c6) 0 35px / 100% 1px no-repeat; }
.g-style .body, .g-cells .body { padding-left: 3px; }
.g-edit .body { padding-left: 7px; }
.stack { display: flex; flex-direction: column; gap: 1px; }
.g-clip .stack { padding-left: 1px; }
.g-edit .stack { width: 124px; }
.small { display: flex; align-items: center; gap: 3px; height: 22px; }
.rows { display: flex; flex-direction: column; gap: 8px; padding-top: 7px; }
.line { display: flex; height: 23px; }
.line.second { height: 22px; }
.tallrow { height: 23px; }
.g-font .rows, .g-align .body, .g-num .rows { padding-left: 3px; }
.g-font .rows { padding-left: 3px; }
.ib { display: flex; align-items: center; justify-content: center; flex: none; width: 22px; height: 100%; }
.cb { display: flex; align-items: center; justify-content: center; flex: none; width: 12px; height: 100%; }
.sep { flex: none; width: 1px; margin: 0 4px; background: #d9d9d9; }
.tall { width: 1px; height: 55px; margin: 6px 6px 0 5px; background: #d9d9d9; }
.g-align .rows:first-child { width: 119px; }
.pressed { background: #c6c6c6; }
.strong { font-weight: 700; font-size: 12px; }
.ital { font-style: italic; font-family: "Liberation Serif", serif; font-size: 14px; }
.under { text-decoration: underline; }
.fa { font-weight: 600; font-size: 14px; color: #666; }
.shrink-a .fa { font-size: 12px; }
.ib.grow-a svg, .ib.shrink-a svg { align-self: flex-start; margin-top: 4px; }
.orient span { font-size: 12px; font-weight: 600; transform: rotate(-45deg); margin-right: -6px; }
.orient svg { align-self: flex-end; margin-bottom: 3px; }
.pct { font-size: 15px; font-weight: 600; color: #666; }
.zeros { font-size: 10px; font-weight: 700; color: #666; }
.dec { position: relative; flex-direction: column; align-items: stretch; padding: 0 3px; font-size: 10px; line-height: 9px; font-weight: 600; color: #666; }
.end { text-align: right; }
.dec svg { position: absolute; left: 3px; top: 4px; }
.dec.inc svg { top: 13px; }
.sel { display: flex; align-items: center; background: #fff; border: 1px solid #c3c3c3; padding-right: 4px; }
.sel select { appearance: none; flex: 1; min-width: 0; padding-left: 2px; }
.wide { width: 112px; } .narrow { width: 43px; border-left: 0; } .full { width: 132px; }
.collapse { align-self: flex-end; margin: 0 9px 4px 0; }

.formula { display: flex; height: 46px; padding: 10px 5px; }
.namebox, .fx, .input { display: flex; align-items: center; height: 26px; background: #fdfdfd; border: 1px solid #c8c8c8; font-size: 13px; }
.namebox { width: 102px; }
.namebox input { flex: 1; min-width: 0; padding-left: 6px; }
.namebox button { padding-right: 5px; }
.dots { width: 2px; height: 11px; align-self: center; background: repeating-linear-gradient(#aaa 0 2px, transparent 2px 5px); }
.formula .dots { margin: 0 14px; }
.fx { width: 110px; }
.fx button { display: flex; flex: 1; justify-content: center; align-items: center; }
.fn { font-family: "Liberation Serif", serif; font-weight: 700; font-size: 16px; color: #555; }
.fn .x { font-size: 11px; padding-top: 4px; }
.input { flex: 1; margin-left: 3px; }
.input input { flex: 1; padding-left: 11px; font-size: 14px; }
.input button { padding-right: 4px; }

.sheet { display: flex; flex: 1; }
.canvas { position: relative; flex: 1; min-width: 0; overflow: hidden; background: #a0a0a0; }
table { width: 1577px; table-layout: fixed; border-collapse: separate; border-spacing: 0; font-family: Lato, "Open Sans", sans-serif; font-size: 16px; line-height: 19px; color: #111; }
.rowcol { width: 34px; }
th, td { padding: 0; overflow: visible; white-space: nowrap; }
th { font-weight: 400; text-align: center; background: #e6e6e6; color: #222; }
thead th { height: 23px; padding-top: 1px; border-right: 1px solid #bcbcbc; border-bottom: 1px solid #9b9b9b; }
thead th.cur { background: #d2d2d2; color: #217346; border-bottom: 2px solid #217346; }
.corner svg { margin: 4px 2px 0 auto; }
tbody th { height: 22px; padding-top: 2px; border-right: 1px solid #9b9b9b; border-bottom: 1px solid #c2c2c2; }
tbody th.cur { background: #d2d2d2; color: #217346; border-right: 2px solid #217346; }
td { height: 22px; padding: 2px 4px 0 3px; background: #a0a0a0; text-align: left; }
td.printed { background: #fff; }
td.lined { border-right: 1px solid #d8d8d8; border-bottom: 1px solid #d8d8d8; }
td.head { background: #dce6f1; }
td.bold { font-weight: 700; color: #000; }
td.num { text-align: right; }
td.rule { border-bottom: 1px solid #95b3d7; }
.with-filter { display: flex; align-items: center; justify-content: space-between; height: 19px; margin-right: -3px; }
.filter { display: flex; align-items: center; justify-content: center; width: 17px; height: 17px; background: #fafafa; border: 1px solid #a9adb5; }

.mark { position: absolute; font-family: "Liberation Sans", Arial, sans-serif; color: #969696; mix-blend-mode: multiply; white-space: nowrap; }
.one { left: 240px; top: 188px; font-size: 51px; line-height: 60px; }
.two { left: 790px; top: 196px; font-size: 38px; line-height: 44px; }
.print-area { position: absolute; left: 34px; top: 23px; width: 1043px; height: 398px; border: 1px solid #0000c8; border-bottom-width: 3px; }
.page-break { position: absolute; left: 644px; top: 23px; width: 3px; height: 398px; background: #0000c8; }
.unprinted { position: absolute; left: 1077px; top: 21px; width: 343px; height: 411px; border: 3px solid #000; }
.selection { position: absolute; left: 428px; top: 176px; width: 116px; height: 24px; border: 2px solid #217346; }
.selection::after { content: ""; position: absolute; right: -3px; bottom: -3px; width: 6px; height: 6px; background: #217346; border: 1px solid #fff; border-width: 1px 0 0 1px; }
.logo { position: absolute; left: 779px; top: 473px; display: flex; align-items: center; gap: 8px; font-size: 29px; font-weight: 700; color: #0a0a0a; line-height: 70px; }
.logo span { padding-top: 8px; line-height: 62px; }
.lg-slow { font-size: 23px; font-weight: 700; fill: #fff; }
.lg-seven { font-size: 30px; font-weight: 700; font-style: italic; fill: #000; }
.arrows { position: absolute; left: 0; top: 0; }
.arrows path { stroke: #000; stroke-width: 2; fill: none; }
.arrows marker path { fill: #000; stroke: none; }
.note { position: absolute; background: #fff; border: 2px solid #000; font-family: "Liberation Sans", Arial, sans-serif; font-weight: 700; font-size: 19px; line-height: 22px; color: #000; text-align: center; white-space: nowrap; padding: 7px 0 9px; }
.n1 { left: 218px; top: 530px; width: 268px; padding-bottom: 6px; }
.n2 { left: 465px; top: 646px; width: 448px; }
.n3 { left: 967px; top: 564px; width: 448px; }

.vscroll { display: flex; flex-direction: column; width: 15px; margin: 2px 3px 0; background: #dadada; }
.vscroll button, .hscroll button { display: flex; flex: none; align-items: center; justify-content: center; width: 15px; height: 15px; background: #fff; border: 1px solid #ababab; }
.vthumb { flex: 1; background: #fff; border: 1px solid #ababab; }
.vtrack { height: 23px; }
.tri { width: 0; height: 0; border: 4px solid transparent; }
.tri.up { border-bottom-color: #666; border-top: 0; }
.tri.down { border-top-color: #666; border-bottom: 0; }
.tri.left { border-right-color: #666; border-left: 0; }
.tri.right { border-left-color: #666; border-right: 0; }
.tri.green { border-right-color: #217346; }
.tri.pale { border-left-color: #bbb; }

.sheets { display: flex; height: 28px; color: #555; }
.navs { display: flex; width: 101px; padding-left: 15px; border-right: 1px solid #ababab; margin: 4px 0; }
.navs button { display: flex; flex: 1; align-items: center; justify-content: center; }
.navs .more { color: #217346; font-weight: 700; font-size: 14px; padding-bottom: 4px; }
.st { flex: none; height: 20px; margin-top: 4px; border-right: 1px solid #ababab; text-align: center; }
.st.on { height: 25px; margin-top: 0; padding-top: 3px; background: #fff; color: #217346; font-weight: 700; border-bottom: 2px solid #217346; }
.add { margin-left: 32px; }
.sheets .dots { margin-right: 15px; }
.hscroll { display: flex; flex: 0 1 586px; height: 15px; margin: 7px 21px 0 0; background: #dadada; }
.hthumb { flex: 1; background: #fff; border: 1px solid #ababab; }
.htrack { width: 47px; }

.status { display: flex; align-items: center; height: 22px; background: #f0f0f0; border-top: 1px solid #bcbcbc; font-size: 11px; padding: 0 20px 0 7px; }
.status button { display: flex; align-items: center; justify-content: center; width: 38px; height: 21px; }
.status .on { background: #c8c8c8; }
.status .zb { width: 16px; }
.status input { appearance: none; width: 100px; height: 12px; background: linear-gradient(#aaa, #aaa) 0 6px / 100% 1px no-repeat, linear-gradient(#aaa, #aaa) 50px 3px / 1px 6px no-repeat; }
.status input::-webkit-slider-thumb { appearance: none; width: 4px; height: 11px; background: #555; }
.pct-label { width: 37px; text-align: right; }
</style>
